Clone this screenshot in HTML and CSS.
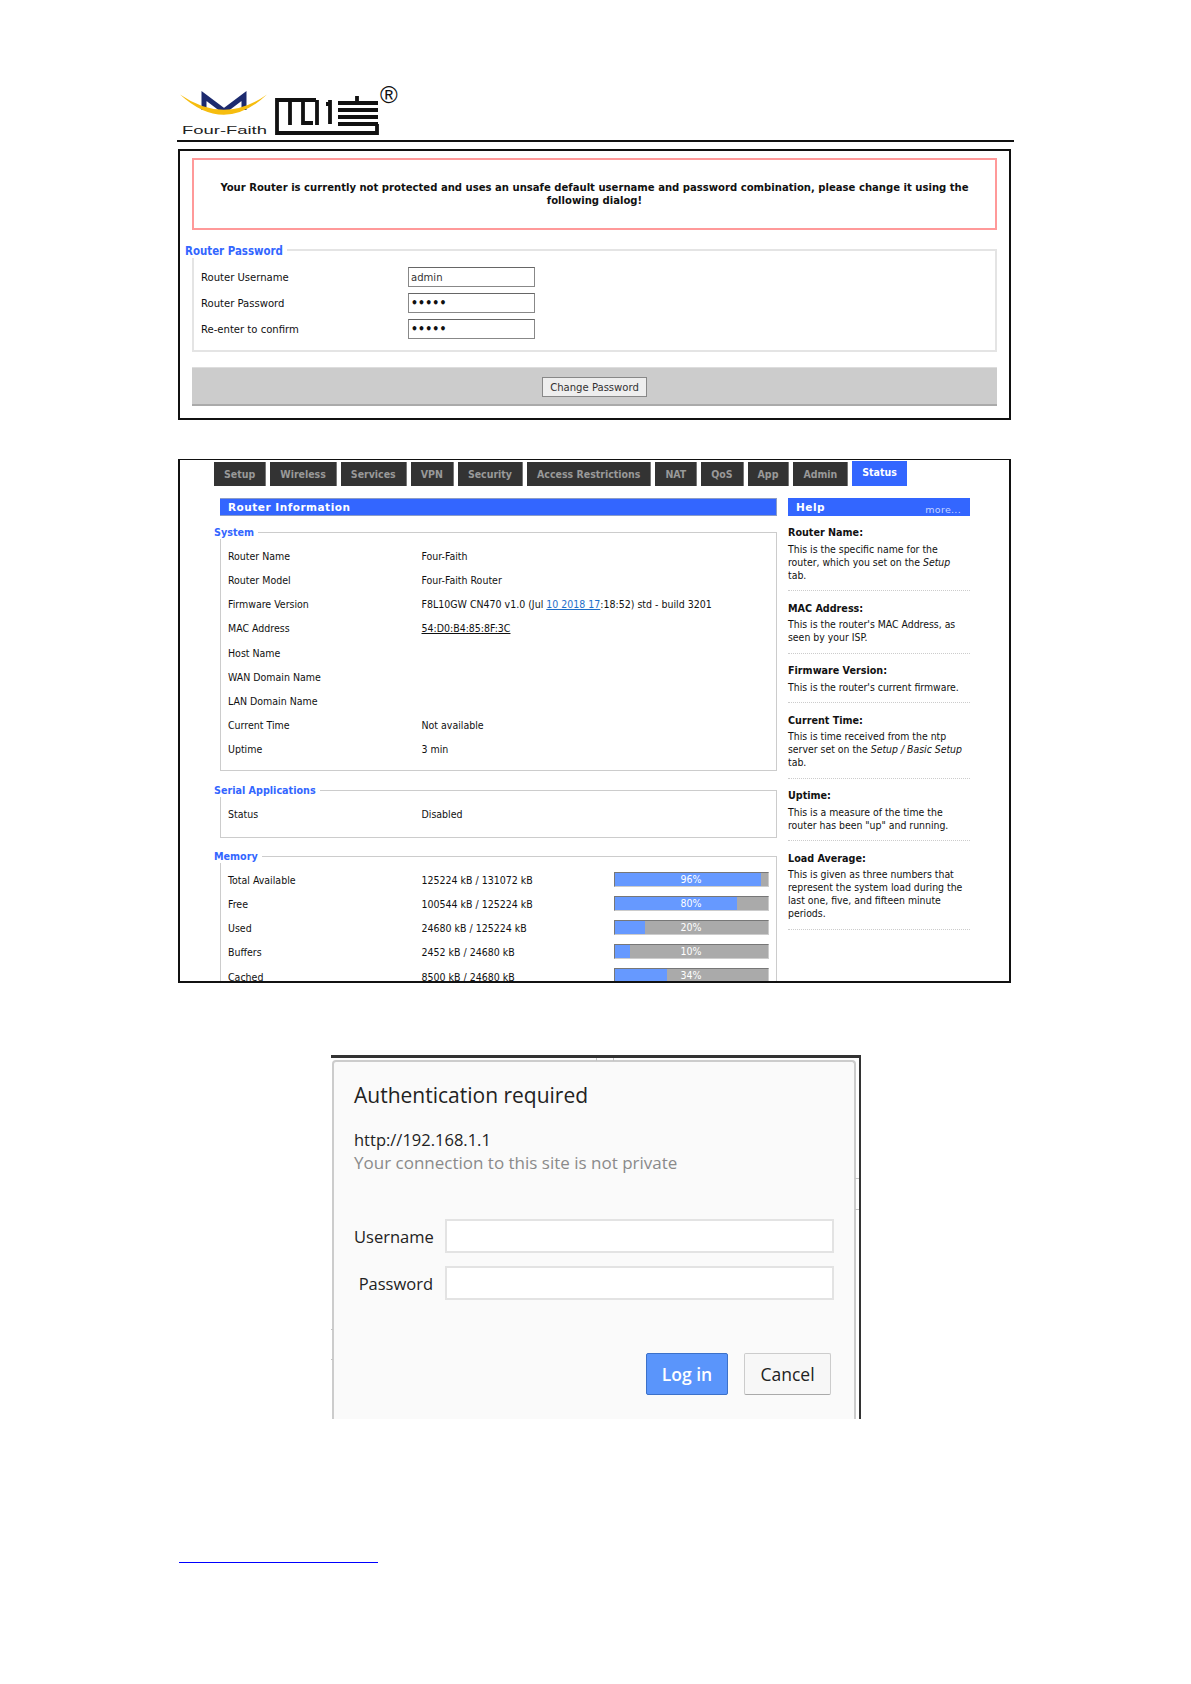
FILE: index.html
```html
<!DOCTYPE html>
<html lang="en">
<head>
<meta charset="utf-8">
<title>Four-Faith Router</title>
<link rel="stylesheet" href="styles.css">
</head>
<body>
<div class="page">
  <header class="brand">
    <svg class="logo" width="225" height="55" viewBox="0 0 225 55" aria-label="Four-Faith logo">
      <path class="mark" d="M27 25 V11 L47 26 L67 11 V25"/>
      <path class="arc" d="M3 9.5 Q47 50 90 9.5 Q47 40 3 9.5Z"/>
      <path class="glyph" d="M139 15 H100 V48 H200 V39 M161 18 H201 M161 25 H201 M161 32 H201 M161 39 H201 M180 11 V18 M113 17 V40 M126 17 V38 H136 M140 15 V40 M153 15 V39 M149 19 H153"/>
      <text class="wordmark" x="5" y="49" textLength="85" lengthAdjust="spacingAndGlyphs">Four-Faith</text>
      <text class="registered" x="203" y="18">®</text>
    </svg>
  </header>
  <div class="rule"></div>

  <section class="panel panel-password">
    <div class="warning">Your Router is currently not protected and uses an unsafe default username and password combination, please change it using the following dialog!</div>
    <fieldset class="pw-set">
      <legend>Router Password</legend>
      <div class="pw-row"><label>Router Username</label><input type="text" value="admin"></div>
      <div class="pw-row"><label>Router Password</label><input type="password" value="admin"></div>
      <div class="pw-row"><label>Re-enter to confirm</label><input type="password" value="admin"></div>
    </fieldset>
    <div class="actions"><button type="button">Change Password</button></div>
  </section>

  <section class="panel panel-status">
    <nav class="tabs">
      <a>Setup</a><a>Wireless</a><a>Services</a><a>VPN</a><a>Security</a><a>Access Restrictions</a><a>NAT</a><a>QoS</a><a>App</a><a>Admin</a><a class="active">Status</a>
    </nav>
    <div class="columns">
      <main>
        <h2 class="bar-title">Router Information</h2>
        <fieldset class="info">
          <legend>System</legend>
          <div class="row"><span>Router Name</span><span>Four-Faith</span></div>
          <div class="row"><span>Router Model</span><span>Four-Faith Router</span></div>
          <div class="row"><span>Firmware Version</span><span>F8L10GW CN470 v1.0 (Jul <a class="date">10 2018 17</a>:18:52) std - build 3201</span></div>
          <div class="row"><span>MAC Address</span><span class="mac">54:D0:B4:85:8F:3C</span></div>
          <div class="row"><span>Host Name</span><span></span></div>
          <div class="row"><span>WAN Domain Name</span><span></span></div>
          <div class="row"><span>LAN Domain Name</span><span></span></div>
          <div class="row"><span>Current Time</span><span>Not available</span></div>
          <div class="row"><span>Uptime</span><span>3 min</span></div>
        </fieldset>
        <fieldset class="info serial">
          <legend>Serial Applications</legend>
          <div class="row"><span>Status</span><span>Disabled</span></div>
        </fieldset>
        <fieldset class="info memory">
          <legend>Memory</legend>
          <div class="row mem"><span>Total Available</span><span>125224 kB / 131072 kB</span><div class="meter"><i style="width:96%"></i><b>96%</b></div></div>
          <div class="row mem"><span>Free</span><span>100544 kB / 125224 kB</span><div class="meter"><i style="width:80%"></i><b>80%</b></div></div>
          <div class="row mem"><span>Used</span><span>24680 kB / 125224 kB</span><div class="meter"><i style="width:20%"></i><b>20%</b></div></div>
          <div class="row mem"><span>Buffers</span><span>2452 kB / 24680 kB</span><div class="meter"><i style="width:10%"></i><b>10%</b></div></div>
          <div class="row mem"><span>Cached</span><span>8500 kB / 24680 kB</span><div class="meter"><i style="width:34%"></i><b>34%</b></div></div>
        </fieldset>
      </main>
      <aside>
        <h2 class="bar-title help-title"><span>Help</span><small>more...</small></h2>
        <div class="help-item"><h3>Router Name:</h3><p>This is the specific name for the router, which you set on the <em>Setup</em> tab.</p></div>
        <div class="help-item"><h3>MAC Address:</h3><p>This is the router's MAC Address, as seen by your ISP.</p></div>
        <div class="help-item"><h3>Firmware Version:</h3><p>This is the router's current firmware.</p></div>
        <div class="help-item"><h3>Current Time:</h3><p>This is time received from the ntp server set on the <em>Setup / Basic Setup</em> tab.</p></div>
        <div class="help-item"><h3>Uptime:</h3><p>This is a measure of the time the router has been "up" and running.</p></div>
        <div class="help-item"><h3>Load Average:</h3><p>This is given as three numbers that represent the system load during the last one, five, and fifteen minute periods.</p></div>
      </aside>
    </div>
  </section>

  <section class="auth-frame">
    <span class="tick tick-top-a"></span><span class="tick tick-top-b"></span>
    <span class="tick tick-right-a"></span><span class="tick tick-right-b"></span>
    <span class="tick tick-left-a"></span><span class="tick tick-left-b"></span>
    <div class="auth">
      <h1>Authentication required</h1>
      <div class="origin">http://192.168.1.1</div>
      <div class="private">Your connection to this site is not private</div>
      <div class="auth-row first"><label>Username</label><input type="text"></div>
      <div class="auth-row"><label>Password</label><input type="password"></div>
      <div class="auth-actions"><button type="button" class="login">Log in</button><button type="button" class="cancel">Cancel</button></div>
    </div>
  </section>

  <div class="footnote-rule"></div>
</div>
</body>
</html>
```
FILE: styles.css
```css
* { box-sizing: border-box; }
html, body { margin: 0; background: #fff; }
body { font-family: "DejaVu Sans Condensed", "DejaVu Sans", sans-serif; font-size: 10.5px; color: #111; }
.page { padding: 85px 0 0 177px; height: 1684px; overflow: hidden; }

.brand { height: 55px; }
.logo { display: block; overflow: visible; }
.arc { fill: #f6bd0f; }
.mark { fill: none; stroke: #1c2a6e; stroke-width: 5; }
.glyph { fill: none; stroke: #111; stroke-width: 3.8; }
.wordmark { font-family: "Liberation Sans", sans-serif; font-size: 11px; fill: #222; }
.registered { font-family: "Liberation Sans", sans-serif; font-size: 24px; fill: #111; }
.rule { width: 837px; height: 2px; background: #111; }

.panel { margin-left: 1px; width: 833px; border: 2px solid #111; }
.panel-password { margin-top: 7px; height: 271px; padding: 7px 12px 0; }
.warning { height: 72px; padding: 21px 20px 0; border: 2px solid #f99; font-weight: 700; font-size: 11.2px; line-height: 13px; text-align: center; }

legend { color: #36f; font-weight: 700; padding: 0 4px 0 0; }
.pw-set { margin: 12px 0 0; padding: 6px 7px 0; height: 110px; border: 2px solid #e4e4e4; font-size: 11.2px; }
.pw-set legend { margin-left: -16px; font-size: 11.4px; line-height: 14px; padding-top: 2px; }
.pw-row { display: grid; grid-template-columns: 207px 127px; align-items: center; height: 26px; }
.pw-row input { width: 127px; height: 20px; border: 1px solid #888; border-top-color: #666; padding: 0 2px; font: 11.2px "DejaVu Sans Condensed", sans-serif; color: #333; }
.pw-row input[type="password"] { font-weight: 700; font-size: 12px; color: #111; letter-spacing: .2px; }
.actions { margin-top: 15px; height: 39px; background: #ccc; border-top: 1px solid #ddd; border-bottom: 2px solid #aaa; display: flex; justify-content: center; align-items: flex-start; padding-top: 9px; }
.actions button { width: 105px; height: 20px; padding: 0; background: #eee; border: 1px solid #888; font: 11.2px "DejaVu Sans Condensed", sans-serif; color: #333; }

.panel-status { margin-top: 39px; height: 524px; overflow: hidden; border-top-width: 1.5px; padding: 1px 0 0 34px; }
.tabs { display: flex; gap: 4px; align-items: flex-end; height: 25px; }
.tabs a { display: block; height: 24px; padding: 0 10px; line-height: 24px; background: #333; color: #999; font-weight: 700; font-size: 10.5px; border-right: 1px solid #777; }
.tabs .active { height: 25px; line-height: 23px; background: #36f; color: #fff; border-right: 0; }

.columns { display: grid; grid-template-columns: 557px 182px; column-gap: 11px; margin: 12px 0 0 6px; }
.bar-title { margin: 0; height: 18px; background: #36f; color: #fff; border: 1px solid #8a9cc8; border-left: 0; font: 700 10.5px/16px "DejaVu Sans", sans-serif; letter-spacing: .5px; padding-left: 8px; }
.help-title { display: flex; justify-content: space-between; border-color: #36f; padding: 0 8px 0 8px; margin-bottom: 10px; }
.help-title small { font-weight: 400; font-size: 9.5px; color: #c5d3ff; padding-top: 3px; letter-spacing: .3px; }

.info { margin: 10px 0 0; padding: 5px 8px 0 7px; border: 2px solid #ccc; border-width: 1.5px; height: 245px; min-width: 0; }
.info legend { margin-left: -14px; line-height: 13px; font-size: 10.7px; }
.serial { height: 54px; margin-top: 13px; padding-top: 5px; }
.memory { height: 140px; margin-top: 12px; }
.row { display: grid; grid-template-columns: 193.5px 1fr; height: 24.15px; align-items: center; }
.mem { grid-template-columns: 193.5px 192px 155px; }
.date { color: #1f6fc9; text-decoration: underline; }
.mac { text-decoration: underline; }
.meter { position: relative; height: 15px; margin-bottom: 2px; background: #aaa; border: 1.5px solid #ccc; border-top-color: #777; border-left-color: #777; color: #fff; text-align: center; line-height: 13px; overflow: hidden; }
.meter i { position: absolute; left: 0; top: 0; bottom: 0; background: #69f; }
.meter b { position: relative; font-weight: 400; }

.help-item { padding: 0 0 8.5px; margin-bottom: 10.5px; border-bottom: 1px dotted #ccc; }
.help-item h3 { margin: 0 0 3.5px; font-size: 10.7px; line-height: 13px; font-weight: 700; }
.help-item p { margin: 0; font-size: 10.4px; line-height: 13px; }

.auth-frame { position: relative; margin: 72px 0 0 154px; width: 530px; height: 364px; border-top: 3px solid #333; border-right: 2px solid #333; padding: 2px 3px 0 1px; }
.tick { position: absolute; background: #c4c4c4; }
.tick-top-a, .tick-top-b { top: 0; width: 1px; height: 3px; }
.tick-top-a { left: 265px; }
.tick-top-b { left: 282px; }
.tick-right-a, .tick-right-b { right: 0; width: 4px; height: 1px; }
.tick-right-a { top: 120px; }
.tick-right-b { top: 151px; }
.tick-left-a, .tick-left-b { left: 0; width: 2px; height: 1px; }
.tick-left-a { top: 271px; }
.tick-left-b { top: 301px; }
.auth { height: 100%; background: #fafafa; border: 2px solid #ccc; border-bottom: 0; border-radius: 4px 4px 0 0; padding: 18px 20px 0 20px; font-family: "Open Sans", sans-serif; }
.auth h1 { margin: 0; font-size: 21px; line-height: 30px; font-weight: 400; color: #222; }
.origin { margin-top: 18px; font-size: 16.5px; line-height: 23px; color: #222; }
.private { font-size: 17px; line-height: 23px; color: #8a8a8a; }
.auth-row { display: grid; grid-template-columns: 79px 389px; column-gap: 12px; align-items: center; height: 34px; margin-top: 13px; }
.auth-row.first { margin-top: 45px; }
.auth-row label { font-size: 16.5px; color: #222; text-align: right; white-space: nowrap; }
.auth-row input { width: 389px; height: 34px; border: 2px solid #e3e3e3; background: #fff; }
.auth-actions { display: flex; justify-content: flex-end; gap: 16px; margin-top: 53px; padding-right: 3px; }
.auth-actions button { height: 42px; font: 600 17.5px "Open Sans", sans-serif; border-radius: 2px; padding: 0; }
.login { width: 82px; background: #5a95fb; color: #fff; border: 1.5px solid #3c71c9; }
.auth-actions .cancel { width: 87px; background: #f7f7f7; color: #222; border: 1.5px solid #ccc; border-bottom-color: #aaa; font-weight: 400; }

.footnote-rule { margin: 143px 0 0 2px; width: 199px; height: 1px; background: #00f; }
```
